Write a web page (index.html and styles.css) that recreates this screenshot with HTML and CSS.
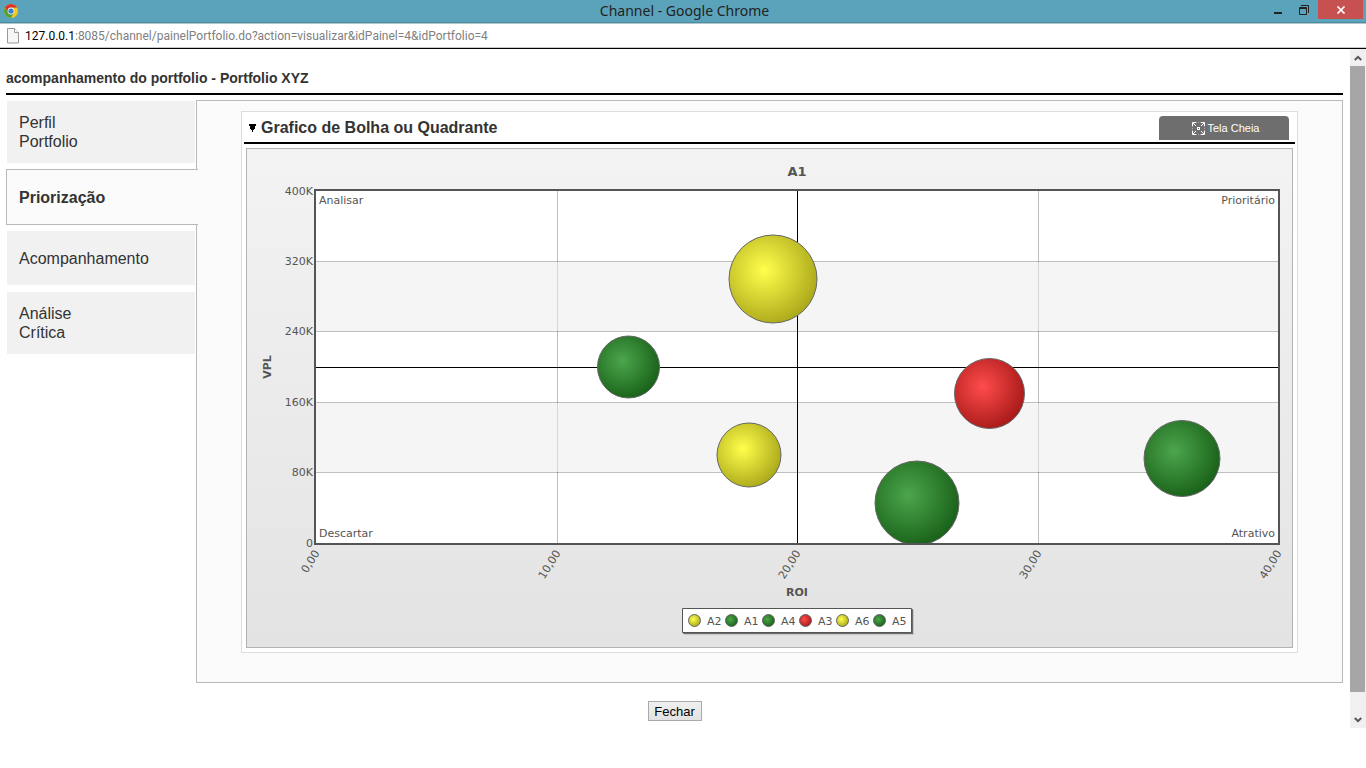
FILE: index.html
```html
<!DOCTYPE html>
<html lang="pt-BR">
<head>
<meta charset="utf-8">
<title>Channel - Google Chrome</title>
<link rel="stylesheet" href="styles.css">
</head>
<body>
<div class="window">
  <header class="titlebar">
    <svg class="app-icon" width="16" height="16" viewBox="0 0 16 16" aria-hidden="true">
      <circle cx="8" cy="8" r="7" fill="#f6c81f"/>
      <path d="M1.940 4.500A7 7 0 0 1 14.060 4.500L8 4.800 5.200 9.600Z" fill="#d9352a"/>
      <path d="M1.940 4.500A7 7 0 0 0 8 15L10.900 9.700 8 8 5.200 9.600Z" fill="#4fa33f"/>
      <circle cx="8" cy="8" r="3.400" fill="#f3f3f3"/>
      <circle cx="8" cy="8" r="2.600" fill="#3f7ccb"/>
    </svg>
    <span class="window-title">Channel - Google Chrome</span>
    <div class="window-controls">
      <button class="control" aria-label="Minimizar"><svg width="10" height="12" viewBox="0 0 10 12"><path d="M1 8h8v2H1z" fill="#222"/></svg></button>
      <button class="control" aria-label="Restaurar"><svg width="10" height="10" viewBox="0 0 10 10"><path d="M2 .5h7.500V8M.5 2.500h7v7h-7zM0 3.500h8" fill="none" stroke="#222"/></svg></button>
      <button class="control control-close" aria-label="Fechar janela"><svg width="10" height="8" viewBox="0 0 10 8"><path d="M1.500 .5l7 7M8.500 .5l-7 7" stroke="#fff" stroke-width="1.700"/></svg></button>
    </div>
  </header>
  <div class="addressbar">
    <svg width="12" height="16" viewBox="0 0 12 16" aria-hidden="true"><path d="M.5 .5h7l4 4v10.500H.5z" fill="#f6f6f6" stroke="#999"/><path d="M7.500 .5v4h4" fill="#fff" stroke="#999"/></svg>
    <span class="url"><span class="host">127.0.0.1</span>:8085/channel/painelPortfolio.do?action=visualizar&amp;idPainel=4&amp;idPortfolio=4</span>
  </div>
  <div class="viewport">
    <main class="page">
      <h1 class="page-title">acompanhamento do portfolio - Portfolio XYZ</h1>
      <div class="workspace">
        <nav class="tabs">
          <a class="tab" href="#perfil">Perfil<br>Portfolio</a>
          <a class="tab tab-active" href="#priorizacao">Priorização</a>
          <a class="tab" href="#acompanhamento">Acompanhamento</a>
          <a class="tab" href="#analise">Análise<br>Crítica</a>
        </nav>
        <section class="panel">
          <div class="widget">
            <div class="widget-head">
              <svg width="7" height="8" viewBox="0 0 7 8" aria-hidden="true"><path d="M0 0h7v2H6v3H5v1H4v2H3V6H2V5H1V2H0z"/></svg>
              <h2 class="widget-title">Grafico de Bolha ou Quadrante</h2>
              <button class="fullscreen">
                <svg width="13" height="13" viewBox="0 0 13 13" aria-hidden="true"><g fill="none" stroke="#fff"><path d="M.5 4V.5H4M9 .5h3.500V4M12.500 9v3.500H9M4 12.500H.5V9M1 1l3 3M12 1L9 4M12 12L9 9M1 12l3-3"/><path d="M4 .5h5M4 12.500h5M.5 4v5M12.500 4v5" stroke-dasharray="1 1" opacity=".4"/></g><path d="M5 5h3v3H5z" fill="#fff"/><path d="M6 6h1v1H6z" fill="#6e6e6e"/></svg>
                Tela Cheia
              </button>
            </div>
            <figure class="chart">
              <svg class="chart-drawing" viewBox="0 0 1045 498" role="img" aria-label="A1: VPL por ROI">
                <defs>
                  <radialGradient id="yellow" cx=".4" cy=".4" r=".7"><stop offset="0" stop-color="#ffff4c"/><stop offset="1" stop-color="#a3a015"/></radialGradient>
                  <radialGradient id="green" cx=".4" cy=".4" r=".7"><stop offset="0" stop-color="#4ca64c"/><stop offset="1" stop-color="#145a14"/></radialGradient>
                  <radialGradient id="red" cx=".4" cy=".4" r=".7"><stop offset="0" stop-color="#ff4c4c"/><stop offset="1" stop-color="#a01414"/></radialGradient>
                  <clipPath id="plot"><path d="M69 42h962v352H69z"/></clipPath>
                </defs>
                <path d="M69 42h962v352H69z" fill="#fff"/>
                <path d="M310.500 42v352M791.500 42v352" stroke="#000" stroke-opacity=".25"/>
                <path d="M69 113h962v69H69zM69 254h962v69H69z" fill="#ebebeb" opacity=".5"/>
                <path d="M69 112.500h962M69 182.500h962M69 253.500h962M69 323.500h962" stroke="#000" stroke-opacity=".25"/>
                <path d="M69 218.500h962M550.500 42v352" stroke="#000"/>
                <path d="M68 41h964v354H68z" fill="none" stroke="#555" stroke-width="2"/>
                <g stroke="#666" clip-path="url(#plot)">
                  <circle cx="526" cy="130" r="44" fill="url(#yellow)"/>
                  <circle cx="381.500" cy="218" r="31" fill="url(#green)"/>
                  <circle cx="670" cy="354" r="42" fill="url(#green)"/>
                  <circle cx="742.500" cy="244.500" r="35" fill="url(#red)"/>
                  <circle cx="502" cy="306" r="32" fill="url(#yellow)"/>
                  <circle cx="935" cy="309.500" r="38" fill="url(#green)"/>
                </g>
                <g class="chart-text">
                  <g class="chart-bold">
                    <text class="chart-title" x="550" y="27" text-anchor="middle">A1</text>
                    <text x="550" y="447" text-anchor="middle">ROI</text>
                    <text text-anchor="middle" transform="translate(24 218) rotate(-90)">VPL</text>
                  </g>
                  <g text-anchor="end">
                    <text x="66" y="46">400K</text>
                    <text x="66" y="116">320K</text>
                    <text x="66" y="186">240K</text>
                    <text x="66" y="257">160K</text>
                    <text x="66" y="327">80K</text>
                    <text x="66" y="398">0</text>
                    <text x="1028" y="55">Prioritário</text>
                    <text x="1028" y="388">Atrativo</text>
                    <text transform="translate(73 404) rotate(-58)">0,00</text>
                    <text transform="translate(314 404) rotate(-58)">10,00</text>
                    <text transform="translate(554 404) rotate(-58)">20,00</text>
                    <text transform="translate(795 404) rotate(-58)">30,00</text>
                    <text transform="translate(1035 404) rotate(-58)">40,00</text>
                  </g>
                  <text x="72" y="55">Analisar</text>
                  <text x="72" y="388">Descartar</text>
                </g>
                <path d="M437 461h230v25H437z" fill="#000" opacity=".12"/>
                <path d="M436 460h230v25H436z" fill="#000" opacity=".45"/>
                <path d="M435.500 459.500h229v24h-229z" fill="#fff" stroke="#555"/>
                <g stroke="#666">
                  <circle cx="447.500" cy="471.500" r="6" fill="url(#yellow)"/>
                  <circle cx="484.500" cy="471.500" r="6" fill="url(#green)"/>
                  <circle cx="521.500" cy="471.500" r="6" fill="url(#green)"/>
                  <circle cx="558.500" cy="471.500" r="6" fill="url(#red)"/>
                  <circle cx="595.500" cy="471.500" r="6" fill="url(#yellow)"/>
                  <circle cx="632.500" cy="471.500" r="6" fill="url(#green)"/>
                </g>
                <g class="chart-text">
                  <text x="460" y="476">A2</text>
                  <text x="497" y="476">A1</text>
                  <text x="534" y="476">A4</text>
                  <text x="571" y="476">A3</text>
                  <text x="608" y="476">A6</text>
                  <text x="645" y="476">A5</text>
                </g>
              </svg>
            </figure>
          </div>
        </section>
      </div>
      <div class="actions"><button class="close-button">Fechar</button></div>
    </main>
    <div class="scrollbar">
      <button class="scroll-arrow" aria-label="Rolar para cima"><svg width="8" height="6" viewBox="0 0 8 6"><path d="M.8 5L4 1.800 7.200 5" fill="none" stroke="#555" stroke-width="2"/></svg></button>
      <div class="scroll-track"><div class="scroll-thumb"></div></div>
      <button class="scroll-arrow" aria-label="Rolar para baixo"><svg width="8" height="6" viewBox="0 0 8 6"><path d="M.8 1L4 4.200 7.200 1" fill="none" stroke="#555" stroke-width="2"/></svg></button>
    </div>
  </div>
</div>
</body>
</html>
```

FILE: styles.css
```css
* { box-sizing: border-box; }

body {
  margin: 0;
  background: #fff;
  color: #333;
  font-family: "Liberation Sans", Arial, sans-serif;
}

button { font-family: inherit; padding: 0; border: 0; }

.window {
  display: flex;
  flex-direction: column;
  min-height: 100vh;
  padding-bottom: 40px;
}

/* Window frame */
.titlebar {
  display: grid;
  grid-template-columns: 1fr auto 1fr;
  align-items: center;
  height: 24px;
  padding: 0 0 1px 3px;
  background: #5ba3bb;
  border-bottom: 1px solid #b5c5cc;
  box-shadow: inset 0 -1px #4a8da3;
}

.window-title {
  font: 14px/22px "Noto Sans", "Open Sans", sans-serif;
  color: #222;
}

.window-controls {
  display: flex;
  justify-content: flex-end;
  align-self: start;
  padding-right: 3px;
}

.control {
  display: flex;
  align-items: center;
  justify-content: center;
  width: 26px;
  height: 19px;
  background: none;
}

.control-close {
  width: 45px;
  margin-left: 1px;
  background: #c75050;
}

.addressbar {
  display: flex;
  align-items: center;
  gap: 6px;
  height: 25px;
  padding: 0 0 1px 7px;
  border-bottom: 1px solid #000;
  box-shadow: inset 0 -1px #c3c9cd;
}

.url {
  font: 12px/22px Roboto, "Open Sans", sans-serif;
  color: #808080;
}

.host { color: #000; }

.viewport {
  display: flex;
  flex: 1;
}

/* Page */
.page {
  flex: 1;
  min-width: 0;
  padding: 0 7px 0 6px;
}

.page-title {
  margin: 0 0 5px;
  padding: 20px 0 6px;
  border-bottom: 2px solid #000;
  font-size: 14px;
  line-height: 18px;
}

.workspace {
  display: flex;
  align-items: stretch;
}

.tabs {
  display: flex;
  flex-direction: column;
  gap: 5px;
  width: 190px;
}

.tab {
  display: flex;
  flex-direction: column;
  justify-content: center;
  min-height: 56px;
  padding: 12px;
  border: 1px solid transparent;
  background: #f1f1f1;
  background-clip: padding-box;
  color: #333;
  font-size: 16px;
  line-height: 19px;
  text-decoration: none;
}

.tab-active {
  z-index: 1;
  margin-right: -2px;
  border-color: #b9b9b9;
  border-right: 0;
  background: #fbfbfb;
  font-weight: bold;
}

.panel {
  flex: 1;
  min-width: 0;
  padding: 10px 44px 29px;
  border: 1px solid #b9b9b9;
  background: #fbfbfb;
}

.widget {
  padding: 2px;
  border: 1px solid #ddd;
  background: #fff;
}

.widget-head {
  display: flex;
  align-items: center;
  gap: 5px;
  height: 30px;
  padding: 0 6px 0 5px;
  border-bottom: 2px solid #000;
}

.widget-title {
  flex: 1;
  margin: 0;
  font-size: 16px;
  line-height: 20px;
}

.fullscreen {
  display: flex;
  align-items: center;
  justify-content: center;
  gap: 3px;
  align-self: flex-end;
  width: 130px;
  height: 24px;
  margin-bottom: 2px;
  padding-left: 3px;
  border-radius: 4px 4px 0 0;
  background: #6e6e6e;
  color: #fff;
  font-size: 11px;
}

.chart {
  margin: 4px 2px 2px;
  border: 1px solid #b3b3b3;
  background: linear-gradient(#f3f3f3, #e3e3e3);
}

.chart-drawing {
  display: block;
  width: 100%;
  height: auto;
}

.chart-text {
  fill: #555;
  font: 11px "DejaVu Sans", Verdana, sans-serif;
}

.chart-bold { font-weight: bold; }

.chart-title { font-size: 13px; }

.actions {
  display: flex;
  justify-content: center;
  padding-top: 18px;
}

.close-button {
  width: 54px;
  height: 20px;
  border: 1px solid #aaa;
  background: linear-gradient(#f0f0f0, #e2e2e2);
  color: #000;
  font-size: 13px;
}

/* Scrollbar */
.scrollbar {
  display: flex;
  flex-direction: column;
  width: 16px;
  background: #f0f0f0;
}

.scroll-arrow {
  display: flex;
  align-items: center;
  justify-content: center;
  height: 17px;
  background: none;
}

.scroll-track { flex: 1; }

.scroll-thumb {
  width: 15px;
  height: 97%;
  background: #a6a6a6;
}
```
